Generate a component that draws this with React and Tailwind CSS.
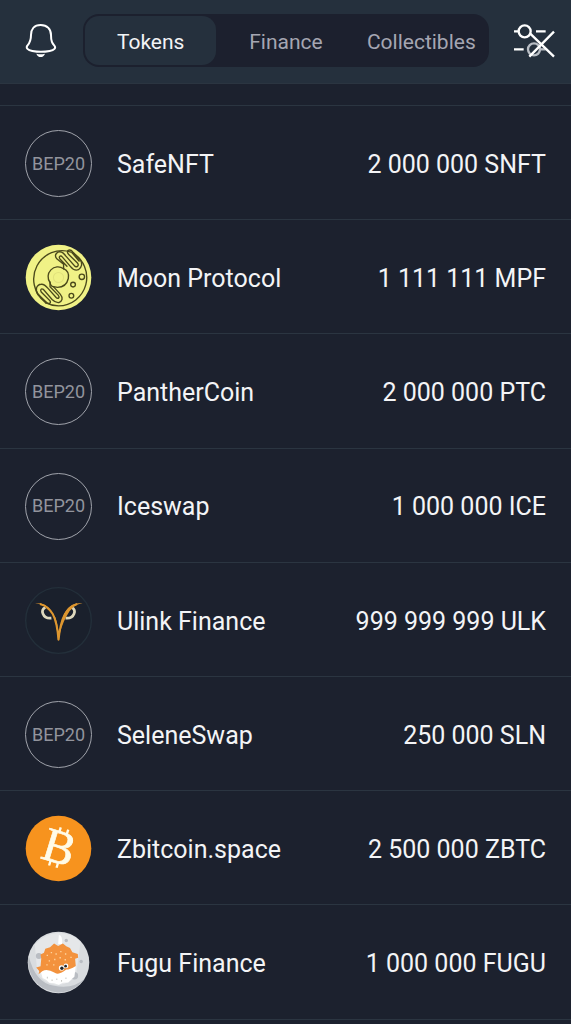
import { useState } from 'react';

const MoonIcon = () => (
    <svg viewBox="32 26 198 198" className="size-full" fill="none" stroke="#4b4a1c" strokeWidth="4" strokeLinecap="round">
        <circle cx="131" cy="125" r="97" fill="#f0f286" stroke="none" />
        <path d="M172 52A84 84 0 0 1 131 209Q111 209 94 200" />
        <path d="M90 196A84 84 0 0 1 168 50" />
        <circle cx="131" cy="125" r="15" stroke="#e2e27c" strokeWidth="3" />
        <path d="M146 99A29 29 0 0 0 106 140Q108 151 116 152" />
        <path d="M146 99Q164 107 160 128Q154 154 128 154L116 152" />
        {/* upper squiggle */}
        <path d="M146 99V86L126 70C116 58 128 46 140 50C146 52 148 56 153 62L180 92C188 96 192 88 187 82L162 58C150 46 164 38 174 50L196 74C202 84 200 96 190 102C178 106 172 100 166 92L142 64C136 58 130 64 136 71L156 92" />
        <path d="M171 51L192 76" strokeWidth="5" />
        {/* lower squiggle */}
        <path d="M116 152L136 174C146 186 142 196 132 199C124 200 118 196 112 190L86 160C80 156 76 162 80 168L106 194C110 202 102 204 96 199L71 176C60 162 66 146 80 145C88 144 94 150 100 157L124 184C130 190 136 184 130 177L106 152V138" />
        <path d="M72 176L94 200" strokeWidth="5" />
        <circle cx="200" cy="123" r="8" />
        <circle cx="174" cy="146" r="7" />
        <circle cx="169" cy="179" r="7" />
    </svg>
);

const UlinkIcon = () => (
    <svg viewBox="32 24 198 198" className="size-full" fill="none">
        <circle cx="131" cy="123" r="97" fill="#1a202c" stroke="#232f3a" strokeWidth="4" />
        <path d="M92 84Q80 91 85 103Q91 118 110 116" stroke="#ded8bd" strokeWidth="8" />
        <path d="M170 84Q182 91 177 103Q171 118 152 116" stroke="#ded8bd" strokeWidth="8" />
        <path d="M62 71Q96 70 110 96Q124 118 130 182H132Q132 140 122 114Q100 76 62 71Z" fill="#dd962f" />
        <path d="M202 71Q166 70 152 96Q138 118 130 182H132Q136 142 156 108Q172 76 202 71Z" fill="#dd962f" />
        <path d="M76 74Q100 80 114 104Q127 128 131 181Q136 130 150 104Q165 80 186 74" stroke="#dd962f" strokeWidth="6" />
    </svg>
);

const BitcoinIcon = () => (
    <svg viewBox="32 25 198 198" className="size-full">
        <circle cx="131" cy="124" r="97" fill="#f7931e" />
        <g transform="rotate(17 131 121)" fill="#fffbe8" stroke="#fffbe8">
            <text x="133" y="167" textAnchor="middle" fontSize="142" strokeWidth="2" className="font-['Liberation_Serif',serif]">
                B
            </text>
            <path d="M120 62V77M143 62V77M120 166V180M143 166V180" strokeWidth="7" />
        </g>
    </svg>
);

const FuguIcon = () => (
    <svg viewBox="32 24 198 198" className="size-full">
        <circle cx="131" cy="123" r="91" fill="#d9dcdf" />
        <path d="M43 103Q62 184 118 192Q174 203 208 171A91 91 0 0 1 43 103Z" fill="#b9bdc3" />
        <path d="M61 70Q91 37 131 36Q176 38 196 62L184 154Q174 184 128 190Q82 184 68 150Z" fill="#e5e7e9" />
        <circle cx="73" cy="104" r="9" fill="#b9bdc3" />
        <circle cx="178" cy="162" r="11" fill="#b9bdc3" />
        <circle cx="154" cy="58" r="5" fill="#b9bdc3" />
        <circle cx="198" cy="120" r="5" fill="#b9bdc3" />
        <path d="M132 42Q143 42 142 68H130Z" fill="#fff" />
        <path d="M78 148L96 144L182 134L178 165L168 174L160 182L144 183L132 189L118 184L104 183L94 174L84 169Z" fill="#fff" />
        <path d="M80 112L78 99L88 94L92 82L106 78L118 67L130 74L144 67L154 75L165 80L172 93L188 98L189 109L180 112L182 133Q164 144 154 144Q132 162 120 153Q98 141 84 148L72 158L74 148L65 138L78 134Z" fill="#f3923d" />
        <path d="M96 102h4M108 94h4M122 98h4M136 91h4M150 98h4M102 118h4M118 114h4M134 109h4M149 115h4M95 130h4M115 130h4M166 108h4" stroke="#ffd39d" strokeWidth="4" />
        <path d="M98 165v5M112 173v5M126 170v5M140 175v5M153 167v5" stroke="#c9c9c5" strokeWidth="3" />
        <circle cx="140" cy="139" r="8" fill="#fff" />
        <circle cx="153" cy="133" r="7" fill="#fff" />
        <circle cx="141" cy="140" r="5" fill="#242629" />
        <circle cx="152" cy="134" r="4" fill="#242629" />
    </svg>
);

const TABS = ['Tokens', 'Finance', 'Collectibles'];

const TOKENS = [
    { name: 'SafeNFT', balance: '2 000 000 SNFT' },
    { name: 'Moon Protocol', balance: '1 111 111 MPF', Icon: MoonIcon },
    { name: 'PantherCoin', balance: '2 000 000 PTC' },
    { name: 'Iceswap', balance: '1 000 000 ICE' },
    { name: 'Ulink Finance', balance: '999 999 999 ULK', Icon: UlinkIcon },
    { name: 'SeleneSwap', balance: '250 000 SLN' },
    { name: 'Zbitcoin.space', balance: '2 500 000 ZBTC', Icon: BitcoinIcon },
    { name: 'Fugu Finance', balance: '1 000 000 FUGU', Icon: FuguIcon },
];

const Header = () => {
    const [active, setActive] = useState('Tokens');

    return (
        <header className="flex items-center bg-[#25303d] border-b border-[#2b3541] pt-3.5 pb-4 pl-[25px] pr-4">
            <button aria-label="Notifications" className="shrink-0">
                <svg viewBox="75 66 96 108" className="w-8 h-9" fill="none" stroke="#fff" strokeWidth="6" strokeLinejoin="round">
                    <path d="M122 72C102 72 93 85 93 102C93 122 88 127 82 134C77 141 83 147 97 150Q123 155 149 150C163 147 169 141 163 134C157 127 153 122 153 102C153 85 142 72 122 72Z" />
                    <path d="M109 158Q122 162 135 158Q131 168 122 168Q113 168 109 158Z" fill="#fff" stroke="none" />
                </svg>
            </button>

            <nav className="grid grid-cols-3 flex-1 ml-[26px] mr-6 h-[53px] rounded-2xl bg-[#1c202e]">
                {TABS.map((tab) => (
                    <button
                        key={tab}
                        onClick={() => setActive(tab)}
                        className={`m-0.5 pt-1 rounded-[14px] text-[21px] ${
                            active === tab ? 'bg-[#25303d] text-gray-100' : 'text-[#a5a6b2]'
                        }`}
                    >
                        {tab}
                    </button>
                ))}
            </nav>

            <button aria-label="Manage tokens" className="shrink-0">
                <svg viewBox="99 69 126 108" className="w-[42px] h-9" fill="none" stroke="#fff" strokeWidth="7">
                    <path d="M102 94H115M168 94H197M102 148H131" />
                    <circle cx="134" cy="94" r="18" />
                    <circle cx="162" cy="148" r="18" stroke="#b8bdc4" />
                    <path d="M181 148H197" stroke="#b8bdc4" />
                    <path d="M150 100L222 170M222 95L148 170" />
                </svg>
            </button>
        </header>
    );
};

const TokenRow = ({ name, balance, Icon }) => (
    <li className="flex items-center aspect-[5/1] border-b border-[#2b3541] px-[25px] pt-0.5">
        <div className="size-[67px] shrink-0">
            {Icon ? (
                <Icon />
            ) : (
                <div className="size-full rounded-full border border-[#a0a3ab] flex items-center justify-center text-lg text-[#92949d]">
                    BEP20
                </div>
            )}
        </div>
        <span className="ml-[25px] pt-0.5 text-[25px] text-gray-100">{name}</span>
        <span className="ml-auto pt-0.5 text-[25px] text-gray-100 whitespace-nowrap">{balance}</span>
    </li>
);

const App = () => {
    return (
        <div className="min-h-screen bg-[#1c212e] font-[Roboto,sans-serif]">
            <Header />
            <ul>
                {/* bottom edge of the row scrolled under the header */}
                <li aria-hidden="true" className="h-[22px] border-b border-[#2b3541]" />
                {TOKENS.map((token) => (
                    <TokenRow key={token.name} {...token} />
                ))}
            </ul>
        </div>
    );
};

export default App;
